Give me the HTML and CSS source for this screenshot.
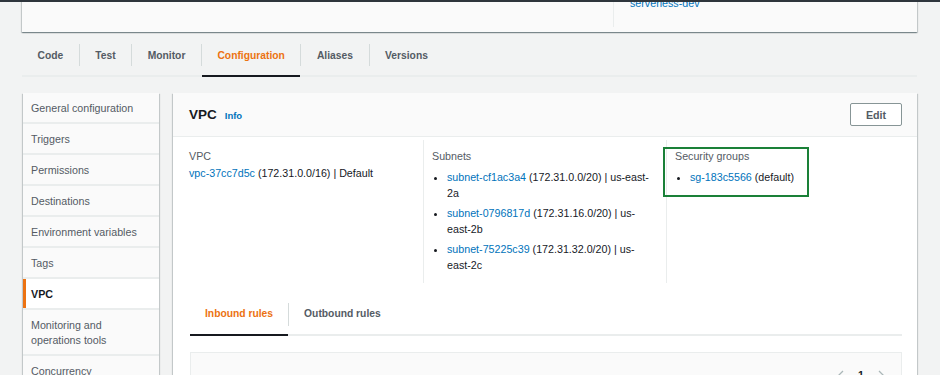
FILE: index.html
```html
<!DOCTYPE html>
<html lang="en">
<head>
<meta charset="utf-8">
<title>Lambda VPC configuration</title>
<link rel="stylesheet" href="styles.css">
</head>
<body>
<div class="page">
  <div class="topcard">
    <div class="tc-left"></div>
    <div class="tc-right">
      <a class="link" href="#">serverless-dev</a>
    </div>
  </div>

  <nav class="tabs">
    <a class="tab" href="#">Code</a>
    <span class="sep"></span>
    <a class="tab" href="#">Test</a>
    <span class="sep"></span>
    <a class="tab" href="#">Monitor</a>
    <span class="sep"></span>
    <a class="tab active" href="#">Configuration</a>
    <span class="sep"></span>
    <a class="tab" href="#">Aliases</a>
    <span class="sep"></span>
    <a class="tab" href="#">Versions</a>
  </nav>

  <div class="layout">
    <aside class="sidenav">
      <a class="nav-item" href="#">General configuration</a>
      <a class="nav-item" href="#">Triggers</a>
      <a class="nav-item" href="#">Permissions</a>
      <a class="nav-item" href="#">Destinations</a>
      <a class="nav-item" href="#">Environment variables</a>
      <a class="nav-item" href="#">Tags</a>
      <a class="nav-item active" href="#">VPC</a>
      <a class="nav-item" href="#">Monitoring and operations tools</a>
      <a class="nav-item" href="#">Concurrency</a>
    </aside>

    <section class="panel">
      <header class="panel-head">
        <h2 class="title">VPC<a class="info" href="#">Info</a></h2>
        <button class="edit" type="button">Edit</button>
      </header>
      <div class="panel-body">
        <div class="cols">
          <div class="col">
            <div class="label">VPC</div>
            <div class="value"><a class="link" href="#">vpc-37cc7d5c</a> (172.31.0.0/16) | Default</div>
          </div>
          <div class="col col-mid">
            <div class="label">Subnets</div>
            <ul class="list">
              <li><a class="link" href="#">subnet-cf1ac3a4</a> (172.31.0.0/20) | us-east-2a</li>
              <li><a class="link" href="#">subnet-0796817d</a> (172.31.16.0/20) | us-east-2b</li>
              <li><a class="link" href="#">subnet-75225c39</a> (172.31.32.0/20) | us-east-2c</li>
            </ul>
          </div>
          <div class="col col-last">
            <div class="label">Security groups</div>
            <ul class="list">
              <li><a class="link" href="#">sg-183c5566</a> (default)</li>
            </ul>
            <div class="highlight"></div>
          </div>
        </div>

        <nav class="subtabs">
          <a class="subtab active" href="#">Inbound rules</a>
          <span class="subsep"></span>
          <a class="subtab" href="#">Outbound rules</a>
        </nav>

        <div class="table-box">
          <div class="pager">
            <svg class="chev" width="7" height="11" viewBox="0 0 7 11"><path d="M6 1 1.5 5.5 6 10" fill="none" stroke="#aab7b8" stroke-width="1.3"/></svg>
            <span class="page-num">1</span>
            <svg class="chev" width="7" height="11" viewBox="0 0 7 11"><path d="M1 1 5.5 5.5 1 10" fill="none" stroke="#aab7b8" stroke-width="1.3"/></svg>
          </div>
        </div>
      </div>
    </section>
  </div>
</div>
</body>
</html>
```

FILE: styles.css
```css
html, body {
  margin: 0;
  padding: 0;
}

body {
  background: #f2f3f3;
  font-family: "Liberation Sans", Arial, sans-serif;
  font-size: 10.7px;
  color: #16191f;
}

a {
  text-decoration: none;
}

.link {
  color: #0073bb;
}

.page {
  border-top: 2px solid #2e353c;
  height: 373px;
  overflow: hidden;
}

/* top card (partially scrolled off) */
.topcard {
  margin: -40px 23px 0 22px;
  background: #fafafa;
  display: grid;
  grid-template-columns: 591px 1fr;
  padding-bottom: 5px;
  box-shadow: 0 1px 1px 0 rgba(0, 28, 36, 0.3), 1px 1px 1px 0 rgba(0, 28, 36, 0.15), -1px 1px 1px 0 rgba(0, 28, 36, 0.15);
}

.tc-right {
  border-left: 1px solid #eaeded;
  padding: 33px 0 16px 16px;
  line-height: 16px;
}

/* main tabs */
.tabs {
  display: flex;
  margin: 3px 23px 0 22px;
  border-bottom: 2px solid #eaeded;
}

.tab {
  line-height: 39px;
  padding: 1px 15.5px 0;
  border-bottom: 2px solid transparent;
  margin-bottom: -2px;
  font-size: 10.3px;
  font-weight: 700;
  color: #545b64;
}

.tab.active {
  color: #ec7211;
  border-bottom-color: #16191f;
}

.sep {
  width: 1px;
  height: 22px;
  align-self: center;
  background: #d5dbdb;
}

/* layout */
.layout {
  display: flex;
  align-items: flex-start;
  gap: 14px;
  margin: 16px 23px 0 23px;
}

.sidenav {
  width: 136px;
  flex: none;
  display: flex;
  flex-direction: column;
  background: #eaeded;
  box-shadow: 0 1px 1px 0 rgba(0, 28, 36, 0.3), 1px 1px 1px 0 rgba(0, 28, 36, 0.15), -1px 1px 1px 0 rgba(0, 28, 36, 0.15);
}

.nav-item {
  display: block;
  background: #fafafa;
  padding: 8px 8px 6px;
  line-height: 15px;
  color: #545b64;
  margin-bottom: 2px;
}

.nav-item.active {
  background: #ffffff;
  color: #16191f;
  font-weight: 700;
  border-left: 3px solid #ec7211;
  padding-left: 5px;
}

.panel {
  flex: 1;
  background: #ffffff;
  box-shadow: 0 1px 1px 0 rgba(0, 28, 36, 0.3), 1px 1px 1px 0 rgba(0, 28, 36, 0.15), -1px 1px 1px 0 rgba(0, 28, 36, 0.15);
}

.panel-head {
  height: 44px;
  box-sizing: border-box;
  background: #fafafa;
  border-bottom: 1px solid #eaeded;
  display: flex;
  align-items: center;
  justify-content: space-between;
  padding: 0 15px 0 16px;
}

.title {
  margin: 0;
  font-size: 13.5px;
  font-weight: 700;
  color: #16191f;
  display: flex;
  align-items: baseline;
}

.info {
  font-size: 9.5px;
  font-weight: 700;
  color: #0073bb;
  margin-left: 8px;
}

.edit {
  width: 52px;
  height: 23px;
  border: 1px solid #879596;
  border-radius: 2px;
  background: #ffffff;
  color: #545b64;
  font-family: "Liberation Sans", Arial, sans-serif;
  font-size: 10.7px;
  font-weight: 700;
  padding: 0;
}

.panel-body {
  padding: 3px 15px 0 16px;
}

.cols {
  display: grid;
  grid-template-columns: 234px 243px 1fr;
}

.col {
  padding: 8px 8px 10px 0;
  line-height: 16px;
}

.col-mid,
.col-last {
  border-left: 1px solid #eaeded;
  padding-left: 8px;
}

.col-mid {
  padding-right: 10px;
}

.col-last {
  position: relative;
}

.label {
  color: #545b64;
}

.value {
  margin-top: 1px;
}

.list {
  margin: 5px 0 0;
  padding-left: 15px;
}

.list li + li {
  margin-top: 4px;
}

.highlight {
  position: absolute;
  left: -4px;
  top: 7px;
  width: 146px;
  height: 50px;
  box-sizing: border-box;
  border: 2px solid #1a8038;
}

/* sub tabs */
.subtabs {
  display: flex;
  margin-top: 13px;
  margin-left: 1px;
  border-bottom: 2px solid #eaeded;
}

.subtab {
  line-height: 34px;
  padding: 1px 15px 3px;
  border-bottom: 2px solid transparent;
  margin-bottom: -2px;
  font-size: 10.3px;
  font-weight: 700;
  color: #545b64;
}

.subtab.active {
  color: #ec7211;
  border-bottom-color: #16191f;
}

.subsep {
  width: 1px;
  height: 23px;
  margin-top: 7px;
  background: #d5dbdb;
}

.table-box {
  margin-top: 16px;
  margin-left: 1px;
  border: 1px solid #eaeded;
  background: #fafafa;
  padding: 14px 16px 20px;
}

.pager {
  display: flex;
  justify-content: flex-end;
  align-items: center;
  gap: 14px;
  line-height: 16px;
}

.page-num {
  font-weight: 700;
  color: #16191f;
}
```
